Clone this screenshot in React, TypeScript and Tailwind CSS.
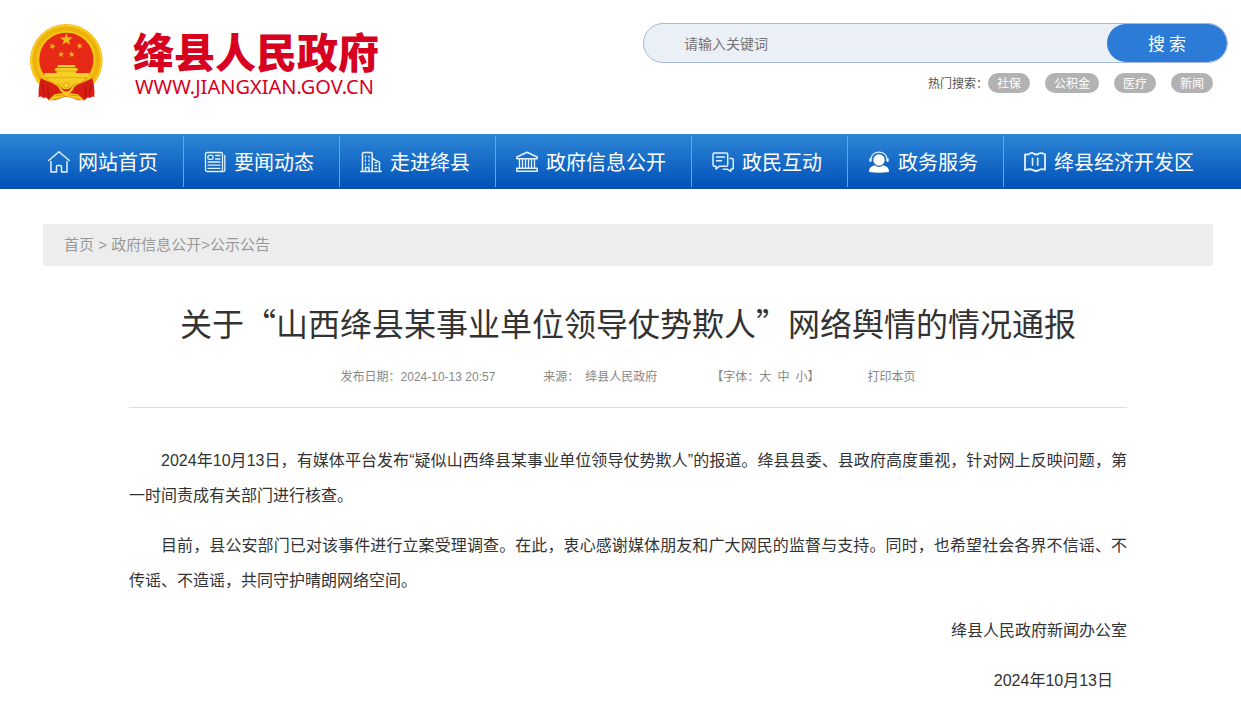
import type { ReactNode } from "react";

const Icon = ({ children }: { children: ReactNode }) => (
  <svg
    viewBox="0 0 22 22"
    className="size-[22px] shrink-0"
    fill="none"
    stroke="#e2f1ff"
    strokeWidth="1.3"
    strokeLinejoin="round"
    strokeLinecap="round"
    aria-hidden="true"
  >
    {children}
  </svg>
);

const navItems = [
  {
    label: "网站首页",
    icon: (
      <path
        d="M.7 9.500 11 .8l10.300 8.700M3 10.500v10.500h5.500v-5.500q0-1 1-1h3q1 0 1 1V21H19V10.500"
        strokeWidth="1.500"
      />
    ),
  },
  {
    label: "要闻动态",
    icon: (
      <>
        <rect x="1.500" y="1.500" width="17" height="19" rx="1.500" />
        <path d="M20.800 4.500v15q0 1-1.500 1h-2" />
        <rect x="4" y="4.300" width="5" height="4" rx="1" />
        <path d="M11.500 4.500h4.500M11.500 8h4.500M4 11h12M4 14.200h12M4 17.400h12" />
      </>
    ),
  },
  {
    label: "走进绛县",
    icon: (
      <>
        <path
          d="M.7 20.400h20.600M2.500 20V2.500q0-1 1-1h7.700q1 0 1 1V20M12.200 7.500l7.300 3.700V20M5.500 20v-3.500h3.500V20"
          strokeWidth="1.500"
        />
        <path d="M5.500 5.200v1.300M9 5.200v1.300M5.500 9v1.300M9 9v1.300M5.500 12.800v1M9 12.800v1M15 11.700h1.800M15 14.500h1.800M15 17.300h1.800" />
      </>
    ),
  },
  {
    label: "政府信息公开",
    icon: (
      <>
        <path
          d="M.8 7.700V6L11 1.300 21.200 6v1.700z"
          strokeWidth="1.500"
        />
        <path d="M3.500 7.700v9M6.500 7.700v9M9.500 7.700v9M12.500 7.700v9M15.500 7.700v9M18.500 7.700v9" />
        <path d="M.8 17.300v3h20.400v-3z" strokeWidth="1.500" />
      </>
    ),
  },
  {
    label: "政民互动",
    icon: (
      <>
        <path
          d="M2.500 2h11.700q1.500 0 1.500 1.500v10.200q0 1.500-1.500 1.500H7.700L4 18v-2.800H2.500Q1 15.200 1 13.700V3.500Q1 2 2.500 2zM4.500 6h8M4.500 9.700h5"
          strokeWidth="1.500"
        />
        <path
          d="M18 7.500h2q1.300 0 1.300 1.500v7.800q0 1.500-1.500 1.500h-1v2.200l-3.300-2.200h-4.200"
          strokeWidth="1.500"
        />
      </>
    ),
  },
  {
    label: "政务服务",
    icon: (
      <>
        <circle cx="11" cy="9" r="5.700" fill="#fff" stroke="none" />
        <path d="M3 9.500V8C4-1.300 18-1.300 19 8v1.500" />
        <path d="M2.300 8v2M19.700 8v2" strokeWidth="2" />
        <path
          d="M1 21q-.5-5 5.700-6.700Q11 17.500 15.300 14.300 21.500 16 21 21q-10 1.500-20 0z"
          fill="#fff"
          stroke="none"
        />
      </>
    ),
  },
  {
    label: "绛县经济开发区",
    icon: (
      <>
        <path
          d="M1 3.500Q3.500 4 6.500 2.200 8 1.500 9.500 2.500 12.500 4.500 15 2.500 17 1.300 21 3.200v15.600q-3.500-1.600-6 .2-3 2-6 0-2.500-1.500-8 0z"
          strokeWidth="1.800"
        />
        <path d="M8.500 7.200v7M13.700 7.200v7" strokeWidth="1.600" />
      </>
    ),
  },
];

const hotWords = ["社保", "公积金", "医疗", "新闻"];

const star = "0,-10 2.400,-3.200 9.500,-3.100 3.800,1.200 5.900,8.100 0,4 -5.900,8.100 -3.800,1.200 -9.500,-3.100 -2.400,-3.200";

const Emblem = () => (
  <svg viewBox="30 24 222 237" className="h-[79px] w-[74px]" aria-hidden="true">
    {/* wheat ring */}
    <circle cx="139" cy="136" r="109" fill="#efb50c" />
    <circle cx="139" cy="136" r="105" fill="none" stroke="#f9cf28" strokeWidth="5" />
    <circle
      cx="139"
      cy="136"
      r="95"
      fill="none"
      stroke="#e2a60b"
      strokeWidth="3"
      strokeDasharray="5 7"
    />
    <circle cx="139" cy="136" r="86" fill="none" stroke="#f5c81f" strokeWidth="4" />
    <circle cx="139" cy="134" r="81" fill="#e62a16" />
    {/* red drapery */}
    <path
      d="M62 190Q54 220 56 247q8-6 14 3 8-7 16 5l18 1 36-12 36 12 19-1q7-12 15-5 6-9 13-3 2-30-6-57l-40 18h-74z"
      fill="#d81e12"
    />
    <path
      d="M67 207q2 18 6 34M84 214q-2 16 2 33M213 207q-3 20-6 33M195 214q4 16 1 33"
      stroke="#a5120c"
      strokeWidth="3"
      fill="none"
    />
    <g fill="#f2ba18">
      <polygon points={star} transform="translate(139 74) scale(2)" />
      <polygon points={star} transform="translate(97 94) rotate(20)" />
      <polygon points={star} transform="translate(179 93) rotate(-20)" />
      <polygon points={star} transform="translate(123 118) rotate(10)" />
      <polygon points={star} transform="translate(155 118) rotate(-10)" />
    </g>
    {/* gate tower */}
    <path
      d="M114 150h50l3 7H111zM107 159h64l4 8H103zM110 167h58v7h-58zM73 174h134v14H73zM79 188h120q-12 13-29 20h-62q-19-8-29-20z"
      fill="#f8cf25"
    />
    <path d="M111 158h56M106 168h66M74 188h130" stroke="#cf870c" strokeWidth="1.500" />
    {/* gear and ribbons */}
    <path
      d="M107 195l20 8q12-9 25 0l20-8 3 12-12 9q-4 12-14 18l25 4 20 19-23-4-32-10-31 10-24 4 20-19 25-4q-10-6-14-18l-13-9z"
      fill="#f6c91d"
    />
    <path d="M121 214q17 19 36 0l-8 12q-9 7-20 0z" fill="#d81e12" />
    <circle cx="139" cy="211" r="8" fill="#f8d42d" stroke="#d0900d" strokeWidth="2" />
    <path
      d="M107 207q15 2 20 14M172 207q-15 2-20 14M106 242l27-3M174 242l-27-3"
      stroke="#c97d0b"
      strokeWidth="2"
      fill="none"
    />
  </svg>
);

const Header = () => (
  <header className="flex h-[134px] items-start justify-between pt-[23px] pr-[13px] pl-[30px]">
    <a href="#" className="flex text-[#d7001f]">
      <Emblem />
      <span className="ml-[29px] flex flex-col pt-[2px]">
        <span className="text-[41px] leading-[50px] font-black">绛县人民政府</span>
        <span className="pl-[2px] font-['Noto_Sans',sans-serif] text-[20px] leading-6">
          WWW.JIANGXIAN.GOV.CN
        </span>
      </span>
    </a>
    <div className="flex w-[585px] flex-col gap-[10px]">
      <form className="flex h-10 overflow-hidden rounded-full border border-[#a6b8dc] bg-[#ebf0f7]">
        <input
          type="text"
          aria-label="请输入关键词"
          placeholder="请输入关键词"
          className="min-w-0 flex-1 bg-transparent pl-10 text-sm text-[#333] outline-none placeholder:text-[#757575]"
        />
        <button
          type="button"
          className="w-[120px] rounded-full bg-[#2b7bd7] text-[17px] text-white"
        >
          搜 索
        </button>
      </form>
      <div className="flex justify-end pr-[15px] text-xs leading-5 text-[#555]">
        <span>热门搜索：</span>
        <div className="flex gap-[15px]">
          {hotWords.map((word) => (
            <a key={word} href="#" className="rounded-full bg-[#b2b2b2] px-[9px] text-white">
              {word}
            </a>
          ))}
        </div>
      </div>
    </div>
  </header>
);

const Nav = () => (
  <nav className="flex h-[55px] border-b border-[#0f4f9f] bg-linear-to-b from-[#2d86d6] to-[#0251b8] pt-[2px] pb-px pl-7">
    {navItems.map((item) => (
      <a
        key={item.label}
        href="#"
        className="flex items-center gap-2 border-r border-[#6ba3e0] pt-px pr-[25px] pl-5 text-xl whitespace-nowrap text-white last:border-r-0"
      >
        <Icon>{item.icon}</Icon>
        {item.label}
      </a>
    ))}
  </nav>
);

const Article = () => (
  <article className="px-[86px] pt-8">
    <h1 className="text-center text-[32px] leading-[48px] text-[#333]">
      关于“山西绛县某事业单位领导仗势欺人”网络舆情的情况通报
    </h1>
    <div className="flex justify-center gap-12 border-b border-[#ddd] pt-[21px] pb-5 font-['Liberation_Sans','Noto_Sans_CJK_SC',sans-serif] text-xs leading-5 text-[#888]">
      <span>
        发布日期：<time>2024-10-13 20:57</time>
      </span>
      <span className="flex gap-[6px] pr-[6px]">
        <span>来源：</span>
        <span>绛县人民政府</span>
      </span>
      <span className="flex">
        【字体：
        <span className="flex gap-[6px]">
          <button type="button">大</button>
          <button type="button">中</button>
          <button type="button">小</button>
        </span>
        】
      </span>
      <button type="button">打印本页</button>
    </div>
    <div className="flex flex-col gap-[15px] pt-[35px] text-justify font-['Liberation_Sans','Noto_Sans_CJK_SC',sans-serif] text-base leading-[35px] text-[#333]">
      <p className="indent-8">
        2024年10月13日，有媒体平台发布“疑似山西绛县某事业单位领导仗势欺人”的报道。绛县县委、县政府高度重视，针对网上反映问题，第一时间责成有关部门进行核查。
      </p>
      <p className="indent-8">
        目前，县公安部门已对该事件进行立案受理调查。在此，衷心感谢媒体朋友和广大网民的监督与支持。同时，也希望社会各界不信谣、不传谣、不造谣，共同守护晴朗网络空间。
      </p>
      <p className="text-right">绛县人民政府新闻办公室</p>
      <p className="pr-[14px] text-right">2024年10月13日</p>
    </div>
  </article>
);

const App = () => {
  return (
    <div lang="zh-CN" className="bg-white font-['Noto_Sans_CJK_SC',sans-serif]">
      <Header />
      <Nav />
      <main className="mt-[35px] mr-7 ml-[43px]">
        <div className="h-[42px] bg-[#ededed] pl-[21px] font-['Liberation_Sans','Noto_Sans_CJK_SC',sans-serif] text-[15px] leading-[42px] text-[#999]">
          <a href="#">首页</a> &gt; <a href="#">政府信息公开</a>&gt;<a href="#">公示公告</a>
        </div>
        <Article />
      </main>
    </div>
  );
};

export default App;
